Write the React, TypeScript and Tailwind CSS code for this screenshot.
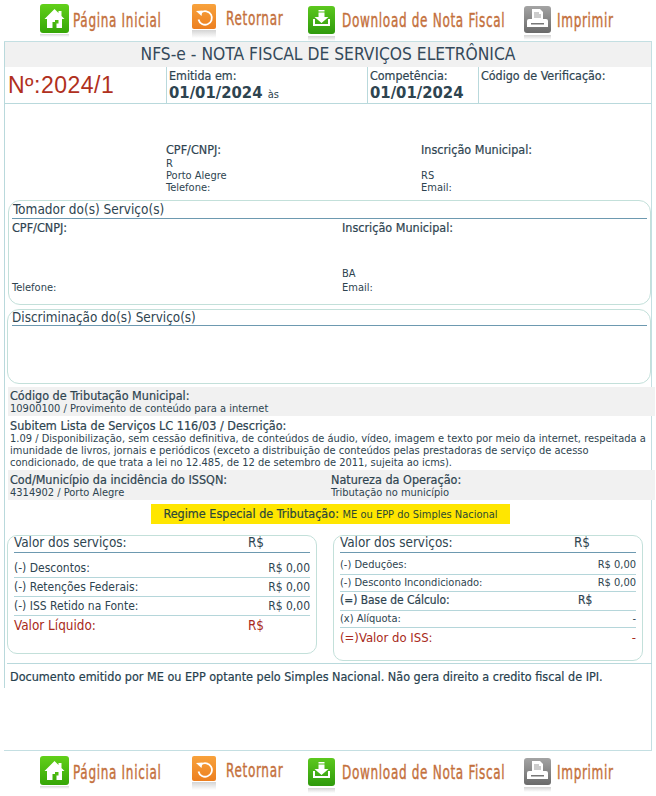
const body = "font-['DejaVu_Sans_Condensed','DejaVu_Sans',sans-serif]";
// the labels are a bit heavier than regular text in the picture
const strong = "[-webkit-text-stroke:0.2px_#2e4450]";

function HomeIcon() {
  return (
    <svg className="shrink-0" width="30" height="36" viewBox="0 0 30 36">
      <defs>
        <linearGradient id="gh" x1="0" y1="0" x2="0" y2="1">
          <stop offset="0" stopColor="#62d01a" />
          <stop offset="1" stopColor="#36a606" />
        </linearGradient>
        <linearGradient id="rg" x1="0" y1="0" x2="0" y2="1">
          <stop offset="0" stopColor="#d8d8d8" />
          <stop offset="1" stopColor="#ffffff" />
        </linearGradient>
      </defs>
      <rect x="0" y="1" width="29" height="29" rx="3" fill="url(#gh)" />
      <path d="M14.5 6L4.5 16h2.5v9h5.5v-6h4v6h5.5v-9h2.5l-3-3V8h-3v2z" fill="#fff" />
      <rect x="15" y="17" width="3.5" height="3.5" fill="#4fbb10" />
      <rect x="0" y="31" width="29" height="3" fill="url(#rg)" />
    </svg>
  );
}

function BackIcon() {
  return (
    <svg className="shrink-0" width="26" height="36" viewBox="0 0 26 36">
      <defs>
        <linearGradient id="go" x1="0" y1="0" x2="0" y2="1">
          <stop offset="0" stopColor="#f8a23c" />
          <stop offset="1" stopColor="#ec7f20" />
        </linearGradient>
        <linearGradient id="rg2" x1="0" y1="0" x2="0" y2="1">
          <stop offset="0" stopColor="#d4d4d4" />
          <stop offset="1" stopColor="#ffffff" />
        </linearGradient>
      </defs>
      <rect x="1" y="2" width="24" height="25" rx="2" fill="url(#go)" />
      <path d="M10 10.5a6.8 6.8 0 1 1-2.5 7" fill="none" stroke="#fff" strokeWidth="1.8" />
      <path d="M5 9l6.5-.5-1 5.5z" fill="#fff" />
      <rect x="1" y="28" width="24" height="8" fill="url(#rg2)" />
    </svg>
  );
}

function DownloadIcon() {
  return (
    <svg className="shrink-0" width="28" height="38" viewBox="0 0 28 38">
      <defs>
        <linearGradient id="gd" x1="0" y1="0" x2="0" y2="1">
          <stop offset="0" stopColor="#5cc81e" />
          <stop offset="1" stopColor="#2f9a0c" />
        </linearGradient>
        <linearGradient id="rg3" x1="0" y1="0" x2="0" y2="1">
          <stop offset="0" stopColor="#d4d4d4" />
          <stop offset="1" stopColor="#ffffff" />
        </linearGradient>
      </defs>
      <rect x="0" y="3" width="27" height="28" rx="3" fill="url(#gd)" />
      <path d="M10.5 7h6v1.5h-6zM10.5 9.5h6V14h4l-7 6-7-6h4z" fill="#fff" />
      <path d="M5 16v7h17v-7h-2v5H7v-5z" fill="#fff" />
      <rect x="0" y="33" width="27" height="5" fill="url(#rg3)" />
    </svg>
  );
}

function PrintIcon() {
  return (
    <svg className="shrink-0" width="28" height="38" viewBox="0 0 28 38">
      <defs>
        <linearGradient id="gp" x1="0" y1="0" x2="0" y2="1">
          <stop offset="0" stopColor="#a4a4a4" />
          <stop offset="1" stopColor="#6a6a6a" />
        </linearGradient>
        <linearGradient id="rg4" x1="0" y1="0" x2="0" y2="1">
          <stop offset="0" stopColor="#d4d4d4" />
          <stop offset="1" stopColor="#ffffff" />
        </linearGradient>
      </defs>
      <rect x="0" y="3" width="27" height="27" rx="3" fill="url(#gp)" />
      <path d="M8 6h8l3 3v7H8z" fill="#fff" />
      <path d="M10 10h5M10 12h7M10 14h7" stroke="#999" strokeWidth="1" />
      <path d="M5 16h17a2 2 0 0 1 2 2v6H3v-6a2 2 0 0 1 2-2z" fill="#fff" />
      <rect x="7" y="20" width="13" height="1.5" fill="#777" />
      <rect x="0" y="32" width="27" height="5" fill="url(#rg4)" />
    </svg>
  );
}

function NavLabel({ children, className }: { children: string; className: string }) {
  return (
    <span className={"inline-block origin-left scale-x-[0.67] font-['DejaVu_Sans_Condensed',sans-serif] text-[20px] leading-none tracking-[1px] text-[#c4703c] [-webkit-text-stroke:0.4px_#c4703c] whitespace-nowrap " + className}>
      {children}
    </span>
  );
}

function Nav({ className }: { className: string }) {
  return (
    <div className={"flex items-start h-[41px] pl-[40px] " + className}>
      <a className="flex items-center gap-[3px] w-[151px]">
        <HomeIcon />
        <NavLabel className="w-[88px] -mt-[2px]">Página Inicial</NavLabel>
      </a>
      <a className="flex items-center gap-[9px] w-[117px] -mt-[1px]">
        <BackIcon />
        <NavLabel className="w-[59px] -mt-[4px]">Retornar</NavLabel>
      </a>
      <a className="flex items-center gap-[6px] w-[216px]">
        <DownloadIcon />
        <NavLabel className="w-[163px] -mt-[4px]">Download de Nota Fiscal</NavLabel>
      </a>
      <a className="flex items-center gap-[5px]">
        <PrintIcon />
        <NavLabel className="w-[55px] -mt-[4px]">Imprimir</NavLabel>
      </a>
    </div>
  );
}

function MoneyRow({ label, value, className }: { label: string; value: string; className: string }) {
  return (
    <div className={"flex justify-between items-center border-b border-[#b5d6da] " + className}>
      <span>{label}</span>
      <span>{value}</span>
    </div>
  );
}

export default function App() {
  return (
    <div className={"w-[656px] h-[796px] overflow-hidden bg-white text-[#2e4450] " + body}>
      <Nav className="pt-[3px]" />
      <div className="mx-[4px] h-[710px] border-t border-r border-b border-[#c4dfe2]">
        <div className="h-[646px] border-l border-[#b9d9dc]">
          <div className="h-[25px] bg-[#f1f1f1] text-center text-[17.3px] leading-[25px] text-[#34495a]">
            NFS-e - NOTA FISCAL DE SERVIÇOS ELETRÔNICA
          </div>
          <div className="flex h-[37px] border-b border-[#b9d9dc]">
            <div className="w-[161px] pl-[3px] pt-[2px] font-['Liberation_Sans',sans-serif] text-[23px] leading-[32px] tracking-[0.5px] text-[#b03020]">Nº:2024/1</div>
            <div className="w-[201px] border-l border-[#b9d9dc] pl-[2px] text-[12.4px] leading-[15px]">
              <div className={"pt-[1px] " + strong}>Emitida em:</div>
              <div className="pt-[1px] text-[16.5px] leading-[18px] font-bold">01/01/2024 <span className="text-[11px] font-normal">às</span></div>
            </div>
            <div className="w-[111px] border-l border-[#b9d9dc] text-[12.4px] leading-[15px] pl-[2px]">
              <div className={"pt-[1px] " + strong}>Competência:</div>
              <div className="pt-[1px] text-[16.5px] leading-[18px] font-bold">01/01/2024</div>
            </div>
            <div className={"flex-1 border-l border-[#b9d9dc] pl-[2px] pt-[1px] text-[12.4px] leading-[15px] " + strong}>Código de Verificação:</div>
          </div>

          {/* prestador */}
          <div className="h-[96px] pt-[39px] pl-[161px] grid grid-cols-[255px_1fr] content-start text-[11px] leading-[12px]">
            <div className={"text-[12.5px] leading-[14px] " + strong}>CPF/CNPJ:</div>
            <div className={"text-[12.5px] leading-[14px] " + strong}>Inscrição Municipal:</div>
            <div className="col-span-2 pt-[1px]">R</div>
            <div>Porto Alegre</div>
            <div>RS</div>
            <div>Telefone:</div>
            <div>Email:</div>
          </div>

          {/* tomador */}
          <div className="ml-[3px] h-[105px] border border-[#c3e0da] rounded-[12px] px-[3px] flex flex-col">
            <div className="h-[18px] border-b border-[#6d99b0] text-[13.5px] leading-[17px] pl-[1px]">Tomador do(s) Serviço(s)</div>
            <div className={"grid grid-cols-[330px_1fr] text-[12.5px] leading-[14px] pt-[2px] " + strong}>
              <div>CPF/CNPJ:</div>
              <div>Inscrição Municipal:</div>
            </div>
            <div className="mt-[33px] pl-[330px] text-[11px] leading-[12px]">BA</div>
            <div className="grid grid-cols-[330px_1fr] text-[11px] leading-[12px] pt-[2px]">
              <div>Telefone:</div>
              <div>Email:</div>
            </div>
          </div>

          {/* discriminacao */}
          <div className="ml-[2px] mt-[4px] h-[75px] border border-[#c3e0da] rounded-[12px] pl-[4px] pr-[3px]">
            <div className="h-[16px] border-b border-[#6d99b0] text-[13.4px] leading-[15px]">Discriminação do(s) Serviço(s)</div>
          </div>

          <div className="ml-[3px] mt-[3px] mr-[-4px]">
            <div className="h-[29px] bg-[#f1f1f1] pl-[2px] text-[11px] leading-[12px]">
              <div className={"text-[12.5px] leading-[15px] pt-[1px] " + strong}>Código de Tributação Municipal:</div>
              <div>10900100 / Provimento de conteúdo para a internet</div>
            </div>
            <div className="h-[54px] pl-[2px] text-[11px] leading-[12px]">
              <div className={"text-[12.5px] leading-[15px] pt-[2px] " + strong}>Subitem Lista de Serviços LC 116/03 / Descrição:</div>
              <div>1.09 / Disponibilização, sem cessão definitiva, de conteúdos de áudio, vídeo, imagem e texto por meio da internet, respeitada a imunidade de livros, jornais e periódicos (exceto a distribuição de conteúdos pelas prestadoras de serviço de acesso condicionado, de que trata a lei no 12.485, de 12 de setembro de 2011, sujeita ao icms).</div>
            </div>
            <div className="h-[30px] bg-[#f1f1f1] pl-[2px] grid grid-cols-[321px_1fr] text-[11px] leading-[12px]">
              <div>
                <div className={"text-[12.5px] leading-[15px] pt-[2px] " + strong}>Cod/Município da incidência do ISSQN:</div>
                <div>4314902 / Porto Alegre</div>
              </div>
              <div>
                <div className={"text-[12.5px] leading-[15px] pt-[2px] " + strong}>Natureza da Operação:</div>
                <div>Tributação no município</div>
              </div>
            </div>
          </div>

          <div className="mt-[4px] ml-[146px] w-[359px] h-[20px] bg-[#ffe600] text-center text-[12.5px] leading-[20px] text-[#2c4a30] whitespace-nowrap">
            <span className={strong}>Regime Especial de Tributação:</span> <span className="text-[11px]">ME ou EPP do Simples Nacional</span>
          </div>

          <div className="flex items-start mt-[11px] ml-[2px] h-[129px] border-b border-[#b9d9dc] mr-[-1px]">
            <div className="w-[310px] h-[119px] border border-[#c3e0da] rounded-[10px] px-[6px]">
              <div className="flex h-[17px] border-b border-[#6d99b0] text-[13.4px] leading-[14px] mb-[6px]">
                <span className="w-[234px]">Valor dos serviços:</span>
                <span>R$</span>
              </div>
              <MoneyRow label="(-) Descontos:" value="R$ 0,00" className="h-[19px] text-[12px]" />
              <MoneyRow label="(-) Retenções Federais:" value="R$ 0,00" className="h-[19px] text-[12px]" />
              <MoneyRow label="(-) ISS Retido na Fonte:" value="R$ 0,00" className="h-[19px] text-[12px]" />
              <div className="flex text-[13.4px] leading-[20px] text-[#a82a20]">
                <span className="w-[234px]">Valor Líquido:</span>
                <span>R$</span>
              </div>
            </div>
            <div className="ml-[16px] w-[310px] h-[126px] border border-[#c3e0da] rounded-[10px] px-[6px]">
              <div className="flex h-[17px] border-b border-[#6d99b0] text-[13.4px] leading-[14px] mb-[4px]">
                <span className="w-[234px]">Valor dos serviços:</span>
                <span>R$</span>
              </div>
              <MoneyRow label="(-) Deduções:" value="R$ 0,00" className="h-[18px] text-[11px]" />
              <MoneyRow label="(-) Desconto Incondicionado:" value="R$ 0,00" className="h-[17px] text-[11px]" />
              <div className={"flex h-[19px] items-center border-b border-[#b5d6da] text-[11.9px] " + strong}>
                <span className="w-[238px]">(=) Base de Cálculo:</span>
                <span>R$</span>
              </div>
              <MoneyRow label="(x) Alíquota:" value="-" className="h-[17px] text-[11px]" />
              <div className="flex justify-between text-[13px] leading-[20px] text-[#a82a20]">
                <span>(=)Valor do ISS:</span>
                <span>-</span>
              </div>
            </div>
          </div>

          <div className={"pl-[5px] pt-[5px] text-[12.5px] leading-[15px] text-[#24404e] " + strong}>
            Documento emitido por ME ou EPP optante pelo Simples Nacional. Não gera direito a credito fiscal de IPI.
          </div>
        </div>
      </div>
      <Nav className="pt-[4px]" />
    </div>
  );
}
